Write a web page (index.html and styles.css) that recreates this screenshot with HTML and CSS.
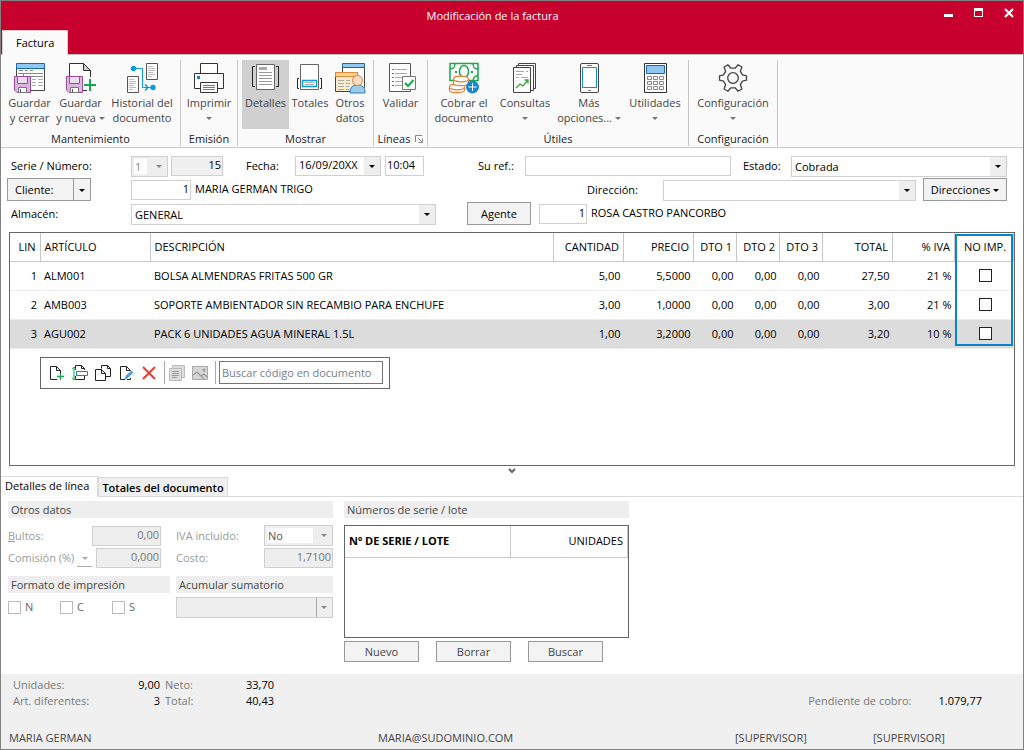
FILE: index.html
```html
<!DOCTYPE html>
<html lang="es">
<head>
<meta charset="utf-8">
<title>Modificación de la factura</title>
<link rel="stylesheet" href="styles.css">
</head>
<body>
<header class="titlebar">
  <h1 class="title">Modificación de la factura</h1>
  <div class="window-buttons">
    <button class="win-btn" aria-label="Minimizar"><svg width="10" height="10" viewBox="0 0 10 10"><path d="M0 6h9v3H0z" fill="#fff"/></svg></button>
    <button class="win-btn" aria-label="Maximizar"><svg width="10" height="10" viewBox="0 0 10 10"><path d="M0 0h9v9H0zM1 3v5h7V3z" fill="#fff" fill-rule="evenodd"/></svg></button>
    <button class="win-btn" aria-label="Cerrar"><svg width="10" height="10" viewBox="0 0 10 10"><path d="M1 1l8 8M9 1l-8 8" stroke="#fff" stroke-width="2.2"/></svg></button>
  </div>
</header>
<nav class="ribbon-tabs"><a class="ribbon-tab" href="#factura">Factura</a></nav>

<section class="ribbon" id="factura">
  <div class="group g-main">
    <div class="tools">
      <button class="tool w51">
        <svg class="icon" viewBox="0 0 32 32"><path d="M2.500 6v22.500h28V6" fill="#fff" stroke="#444"/><path d="M2.500 1.500h28v5h-28z" fill="#91c8f0" stroke="#1569b0"/><path d="M5 8.500h4m2 0h3m2 0h3M4 11.500h25" stroke="#888"/><path d="M9.500 12v3M12 14.500h17" stroke="#888"/><path d="M18 17.500h4m2 0h5M18 20.500h4m2 0h5M18 23.500h4m2 0h5" stroke="#aaa"/><path d="M.5 14.500h16v16H3l-2.500-2.500z" fill="#dcb6df" stroke="#9b4a9e"/><path d="M3.500 14.500v7h10v-7z" fill="#eedcf0" stroke="#9b4a9e"/><path d="M4.500 25.500h8v5h-8z" fill="#fff" stroke="#777"/><path d="M6.500 27v3" stroke="#555"/></svg>
        <span>Guardar<br>y cerrar</span></button>
      <button class="tool w51">
        <svg class="icon" viewBox="0 0 32 32"><path d="M4.500 1.500h14l7 7v20h-21z" fill="#fff" stroke="#333"/><path d="M18.500 1.500v7h7z" fill="#ccc" stroke="#333"/><path d="M22 15h8v14h-8z" fill="#fafafa"/><path d="M1.500 14.500h16v16H4l-2.500-2.500z" fill="#dcb6df" stroke="#9b4a9e"/><path d="M4.500 14.500v7h10v-7z" fill="#eedcf0" stroke="#9b4a9e"/><path d="M5.500 25.500h8v5h-8z" fill="#fff" stroke="#777"/><path d="M7.500 27v3" stroke="#555"/><path d="M25 17v12M19 23h12" stroke="#16a84c" stroke-width="2"/></svg>
        <span>Guardar<br>y nueva <i class="caret"></i></span></button>
      <button class="tool w72">
        <svg class="icon" viewBox="0 0 32 32"><path d="M20.500 1.500h11v16h-11zM1.500 14.500h11v16h-11z" fill="#fff" stroke="#555"/><path d="M22 4.500h5M22 6.500h7M22 8.500h7M22 10.500h5M22 12.500h7M22 14.500h4M3 17.500h5M3 19.500h7M3 21.500h7M3 23.500h5M3 25.500h7M3 27.500h4" stroke="#bbb"/><path d="M8 6.500h8.500v19h9" fill="none" stroke="#0a9be0"/><path d="M19 22.500l3 3-3 3" fill="none" stroke="#0a9be0" stroke-width="1.500"/><circle cx="7.500" cy="6.500" r="2.700" fill="#0a9be0"/><circle cx="27" cy="25.500" r="2.700" fill="#0a9be0"/></svg>
        <span>Historial del<br>documento</span></button>
    </div>
    <div class="group-name">Mantenimiento</div>
  </div>
  <div class="group">
    <div class="tools">
      <button class="tool w56">
        <svg class="icon" viewBox="0 0 32 32"><path d="M7.500 1.500h17v11h-17z" fill="#fff" stroke="#333"/><path d="M1.500 11.500h29v15h-29z" fill="#fff" stroke="#333"/><path d="M7.500 20.500h17v10h-17z" fill="#fff" stroke="#333"/><path d="M10 23.500h12M10 25.500h12M10 27.500h12" stroke="#777"/><path d="M4 14h3v3H4z" fill="#1a7fc9"/></svg>
        <span>Imprimir<br><i class="caret"></i></span></button>
    </div>
    <div class="group-name">Emisión</div>
  </div>
  <div class="group g-show">
    <div class="tools">
      <button class="tool w47 is-on">
        <svg class="icon" viewBox="0 0 32 32"><path d="M6.500 2.500h18v25h-18z" fill="#fff" stroke="#666"/><path d="M9 5h8v3H9z" fill="#aaa"/><path d="M9 10.500h13M9 13.500h13M9 16.500h13M9 19.500h13M9 22.500h13" stroke="#999"/><path d="M5 4.500H2.500v20H5M26 4.500h2.500v20H26" fill="none" stroke="#222"/></svg>
        <span>Detalles</span></button>
      <button class="tool w42">
        <svg class="icon" viewBox="0 0 32 32"><path d="M6.500 2.500h18v25h-18z" fill="#fff" stroke="#666"/><path d="M5 16.500H3.500v10H5M26 16.500h1.500v10H26" fill="none" stroke="#222"/><path d="M8.500 18.500h14v6h-14z" fill="#fff" stroke="#0a9be0" stroke-width="1.500"/><path d="M11 20.500h9M11 22.500h9" stroke="#aaa"/></svg>
        <span>Totales</span></button>
      <button class="tool w38">
        <svg class="icon" viewBox="0 0 32 32"><path d="M8.500 5.500h22v20h-22z" fill="#fff" stroke="#444"/><path d="M8.500 1.500h22v4h-22z" fill="#91c8f0" stroke="#1569b0"/><path d="M1.500 10.500h22v19h-22z" fill="#faebcc" stroke="#444"/><path d="M1.500 10.500h22v4h-22z" fill="#f6d28c" stroke="#e08a3c"/><path d="M4 18.500h6m2 0h4M4 21.500h6m2 0h4M4 24.500h6m2 0h3M4 27.500h6m2 0h3" stroke="#aaa"/><path d="M16 31c0-6 3-8 7.500-8s7.500 2 7.500 8z" fill="#9ccbec" stroke="#2a7dbd"/><circle cx="23.500" cy="18.500" r="5" fill="#f8dcc3" stroke="#d78148"/></svg>
        <span>Otros<br>datos</span></button>
    </div>
    <div class="group-name">Mostrar</div>
  </div>
  <div class="group">
    <div class="tools">
      <button class="tool w53">
        <svg class="icon" viewBox="0 0 32 32"><path d="M4.500 1.500h21v28h-21z" fill="#fff" stroke="#555"/><path d="M10 7.500h12M10 11.500h12M10 15.500h12M10 19.500h8M10 23.500h8" stroke="#aaa"/><path d="M7 7.500h2M7 15.500h2M7 19.500h2" stroke="#16a84c"/><path d="M7 11.500h2M7 23.500h2" stroke="#d33"/><path d="M17.500 14.500h13v13h-13z" fill="#fff" stroke="#777"/><path d="M20 21l3 3 5.500-6" fill="none" stroke="#16a84c" stroke-width="2"/></svg>
        <span>Validar</span></button>
    </div>
    <div class="group-name with-launcher">Líneas <button class="launcher" aria-label="Opciones de líneas"><svg width="8" height="8" viewBox="0 0 8 8"><path d="M.5 7V.5H7M3 3l4 4M7.500 3.500v4h-4" fill="none" stroke="#888"/></svg></button></div>
  </div>
  <div class="group g-utils">
    <div class="tools">
      <button class="tool w68">
        <svg class="icon" viewBox="0 0 32 32"><path d="M2 1.500h28v17H2z" fill="#fff" stroke="#16a84c" stroke-width="1.500"/><path d="M2 7c4 0 5-2 5-5M30 7c-4 0-5-2-5-5M25 19c0-3 1-5 5-5" fill="none" stroke="#16a84c" stroke-width="1.300"/><ellipse cx="16" cy="9.500" rx="4.500" ry="6" fill="#fff" stroke="#16a84c" stroke-width="1.500"/><path d="M7 9h2v2H7zM23 9h2v2h-2z" fill="#16a84c"/><g fill="#fff" stroke="#ee7a30" stroke-width="1.200"><path d="M1.500 25v3c0 3.500 15 3.500 15 0v-3"/><ellipse cx="9" cy="25" rx="7.500" ry="2.800"/><path d="M5.500 17v4c0 3.500 15 3.500 15 0v-4"/><ellipse cx="13" cy="17" rx="7.500" ry="2.800"/></g><circle cx="24.500" cy="25" r="6.500" fill="#1a87d0"/><path d="M20.500 25h8M24.500 21v8" stroke="#fff"/></svg>
        <span>Cobrar el<br>documento</span></button>
      <button class="tool w54">
        <svg class="icon" viewBox="0 0 32 32"><g fill="#fff" stroke="#444"><path d="M9.500 1.500h17v25h-17z"/><path d="M7.500 3.500h17v25h-17z"/><path d="M4.500 5.500h17v25h-17z"/></g><path d="M7 9.500h8m2 0h2M7 12.500h6M7 15.500h3m2 0h7" stroke="#aaa"/><path d="M7 26l4-4 3 2 5-6M15.500 18H19v3.500" fill="none" stroke="#35a52f" stroke-width="1.300"/></svg>
        <span>Consultas<br><i class="caret"></i></span></button>
      <button class="tool w74">
        <svg class="icon" viewBox="0 0 32 32"><rect x="7.500" y="1.500" width="18" height="29" rx="1.500" fill="#fff" stroke="#444"/><path d="M9.500 5.500h14v20h-14z" fill="#fff" stroke="#1a87d0"/><path d="M14 3.500h5M15 28.500h3" stroke="#777"/></svg>
        <span>Más<br>opciones... <i class="caret"></i></span></button>
      <button class="tool w58">
        <svg class="icon" viewBox="0 0 32 32"><path d="M5.500 1.500h22v29h-22z" fill="#fff" stroke="#333"/><path d="M7.500 3.500h18v8h-18z" fill="#91c8f0" stroke="#1569b0"/><g fill="#fff" stroke="#888"><path d="M8.500 14.500h4v3h-4zM14.500 14.500h4v3h-4zM20.500 14.500h4v3h-4zM8.500 19.500h4v3h-4zM14.500 19.500h4v3h-4zM20.500 19.500h4v3h-4zM8.500 24.500h4v3h-4zM14.500 24.500h4v3h-4zM20.500 24.500h4v3h-4z"/></g></svg>
        <span>Utilidades<br><i class="caret"></i></span></button>
    </div>
    <div class="group-name">Útiles</div>
  </div>
  <div class="group">
    <div class="tools">
      <button class="tool w88">
        <svg class="icon" viewBox="0 0 32 32"><g transform="translate(16 16)" fill="none" stroke="#444" stroke-width="1.300" stroke-linejoin="round"><path d="M9.500-3.100L13.500-2.200V2.200L9.500 3.100 7.400 6.700 8.900 11 5.100 13.200 2.100 9.800H-2.100L-5.100 13.200-8.900 11-7.400 6.700-9.500 3.100-13.500 2.200V-2.200L-9.500-3.100-7.400-6.700-8.900-11-5.100-13.200-2.100-9.800H2.100L5.100-13.200 8.900-11 7.400-6.700z"/><circle r="5.300"/></g></svg>
        <span>Configuración<br><i class="caret"></i></span></button>
    </div>
    <div class="group-name">Configuración</div>
  </div>
</section>

<main class="main">
<form class="head-form">
  <div class="row">
    <label class="lead" for="serie">Serie / Número:</label>
    <span class="combo serie off"><select id="serie" disabled><option>1</option></select></span>
    <input class="box num numero" id="numero" aria-label="Número" value="15" readonly>
    <label class="fecha-label" for="fecha">Fecha:</label>
    <span class="combo fecha"><select id="fecha"><option>16/09/20XX</option></select></span>
    <input class="box hora" aria-label="Hora" value="10:04">
    <label class="ref-label" for="ref">Su ref.:</label>
    <input class="box ref" id="ref">
    <label class="estado-label" for="estado">Estado:</label>
    <span class="combo grow"><select id="estado"><option>Cobrada</option></select></span>
  </div>
  <div class="row">
    <div class="lead split"><button class="btn" type="button">Cliente:</button><button class="btn split-arrow" type="button" aria-label="Más opciones de cliente"><i class="caret dark"></i></button></div>
    <input class="box num cliente" aria-label="Cliente" value="1">
    <output class="name client-name">MARIA GERMAN TRIGO</output>
    <label class="dir-label" for="dir">Dirección:</label>
    <span class="combo grow"><select id="dir"><option></option></select></span>
    <button class="btn dirs" type="button">Direcciones <i class="caret dark"></i></button>
  </div>
  <div class="row">
    <label class="lead" for="almacen">Almacén:</label>
    <span class="combo almacen"><select id="almacen"><option>GENERAL</option></select></span>
    <button class="btn agente" type="button">Agente</button>
    <input class="box num agente-num" aria-label="Agente" value="1">
    <output class="name">ROSA CASTRO PANCORBO</output>
  </div>
</form>

<section class="lines">
  <table class="grid">
    <colgroup><col class="c30"><col class="c110"><col><col class="c70"><col class="c70"><col class="c43"><col class="c43"><col class="c43"><col class="c70"><col class="c62"><col class="c59"></colgroup>
    <thead><tr><th class="r">LIN</th><th>ARTÍCULO</th><th>DESCRIPCIÓN</th><th class="r">CANTIDAD</th><th class="r">PRECIO</th><th class="r">DTO 1</th><th class="r">DTO 2</th><th class="r">DTO 3</th><th class="r">TOTAL</th><th class="r">% IVA</th><th class="c">NO IMP.</th></tr></thead>
    <tbody>
      <tr><td class="r">1</td><td>ALM001</td><td>BOLSA ALMENDRAS FRITAS 500 GR</td><td class="r">5,00</td><td class="r">5,5000</td><td class="r">0,00</td><td class="r">0,00</td><td class="r">0,00</td><td class="r">27,50</td><td class="r">21 %</td><td class="c"><input type="checkbox" class="check" aria-label="No imprimir línea 1"></td></tr>
      <tr><td class="r">2</td><td>AMB003</td><td>SOPORTE AMBIENTADOR SIN RECAMBIO PARA ENCHUFE</td><td class="r">3,00</td><td class="r">1,0000</td><td class="r">0,00</td><td class="r">0,00</td><td class="r">0,00</td><td class="r">3,00</td><td class="r">21 %</td><td class="c"><input type="checkbox" class="check" aria-label="No imprimir línea 2"></td></tr>
      <tr class="selected"><td class="r">3</td><td>AGU002</td><td>PACK 6 UNIDADES AGUA MINERAL 1.5L</td><td class="r">1,00</td><td class="r">3,2000</td><td class="r">0,00</td><td class="r">0,00</td><td class="r">0,00</td><td class="r">3,20</td><td class="r">10 %</td><td class="c"><input type="checkbox" class="check" aria-label="No imprimir línea 3"></td></tr>
    </tbody>
  </table>
  <div class="highlight"></div>
  <div class="line-tools">
    <button class="mini" aria-label="Nueva línea"><svg viewBox="0 0 16 16"><path d="M8 14.500H1.500v-13h6l4 4v3M7.500 1.500v4h4" fill="none" stroke="#222"/><path d="M11.500 8v7M8 11.500h7" stroke="#16a84c" stroke-width="1.300"/></svg></button>
    <button class="mini" aria-label="Insertar línea"><svg viewBox="0 0 16 16"><path d="M3.500 5V.5h6l3 3V5M9.500.5v3h3M3.500 11v3.500h9V11" fill="none" stroke="#222"/><path d="M4.500 6.500h11v4h-11z" fill="none" stroke="#1a7fc9"/><path d="M2 2v13M0 4.500l2-2.500 2 2.500M0 12.500L2 15l2-2.500" fill="none" stroke="#16a84c"/></svg></button>
    <button class="mini" aria-label="Duplicar"><svg viewBox="0 0 16 16"><path d="M6.500 3.500V.5h6l3 3v8h-5M12.500.5v3h3M.5 4.500h6l4 4v7H.5zM6.500 4.500v4h4" fill="none" stroke="#222"/></svg></button>
    <button class="mini" aria-label="Editar"><svg viewBox="0 0 16 16"><path d="M7 14.500H2.500v-13h6l4 4M8.500 1.500v4h4M12.500 13v1.500H9" fill="none" stroke="#222"/><path d="M7 14l1.500-3.500L13.500 6l1.500 1.500-5 5z" fill="#4da3e0" stroke="#1a7fc9" stroke-width=".6"/></svg></button>
    <button class="mini" aria-label="Borrar línea"><svg viewBox="0 0 16 16"><path d="M2 2l12 12M14 2L2 14" stroke="#ee3b32" stroke-width="2"/></svg></button>
    <span class="sep"></span>
    <button class="mini" disabled aria-label="Notas"><svg viewBox="0 0 16 16"><path d="M3.500 3V.5h12v12H13" fill="#ddd" stroke="#bbb"/><path d="M.5 3.500h12v12H.5z" fill="#ddd" stroke="#bbb"/><path d="M3 6.500h7M3 8.500h7M3 10.500h7M3 12.500h5" stroke="#999"/></svg></button>
    <button class="mini" disabled aria-label="Imagen"><svg viewBox="0 0 16 16"><path d="M.5 1.500h15v13H.5z" fill="#d6d6d6" stroke="#aaa"/><circle cx="12" cy="5" r="1.500" fill="#999"/><path d="M1 10l4-3 7 7M9 11l3-2 3 3" fill="none" stroke="#999" stroke-width="1.300"/></svg></button>
    <span class="sep"></span>
    <input class="search" placeholder="Buscar código en documento" aria-label="Buscar código en documento">
  </div>
</section>
<button class="splitter" aria-label="Plegar panel"><svg width="8" height="6" viewBox="0 0 8 6"><path d="M1 1l3 3 3-3" fill="none" stroke="#666" stroke-width="2"/></svg></button>

<nav class="tabs"><a class="tab current" href="#detalles">Detalles de línea</a><a class="tab" href="#totales">Totales del documento</a></nav>
<section class="details" id="detalles">
  <div class="left">
    <h2 class="bar">Otros datos</h2>
    <div class="fields">
      <label for="bultos"><u>B</u>ultos:</label><input class="box num" id="bultos" value="0,00" disabled>
      <label for="iva">IVA incluido:</label><span class="combo off iva"><select id="iva" disabled><option>No</option></select></span>
      <label for="comision">Comisión (%) <i class="drop"><i class="caret"></i></i></label><input class="box num comision" id="comision" value="0,000" disabled>
      <label for="costo">Costo:</label><input class="box num" id="costo" value="1,7100" disabled>
    </div>
    <div class="pair">
      <div>
        <h2 class="bar">Formato de impresión</h2>
        <div class="checks">
          <label><input type="checkbox" class="check" disabled>N</label>
          <label><input type="checkbox" class="check" disabled>C</label>
          <label><input type="checkbox" class="check" disabled>S</label>
        </div>
      </div>
      <div>
        <h2 class="bar">Acumular sumatorio</h2>
        <span class="combo off boxed"><select aria-label="Acumular sumatorio" disabled><option></option></select></span>
      </div>
    </div>
  </div>
  <div class="serials">
    <h2 class="bar">Números de serie / lote</h2>
    <div class="serial-box">
      <table class="serial-table"><thead><tr><th class="serial-col">Nº DE SERIE / LOTE</th><th class="units-col">UNIDADES</th></tr></thead></table>
    </div>
    <div class="actions"><button class="btn">Nuevo</button><button class="btn">Borrar</button><button class="btn">Buscar</button></div>
  </div>
</section>
</main>

<footer class="footer">
  <div class="sums">
    <dl class="totals">
      <dt>Unidades:</dt><dd>9,00</dd><dt>Neto:</dt><dd>33,70</dd>
      <dt>Art. diferentes:</dt><dd>3</dd><dt>Total:</dt><dd>40,43</dd>
    </dl>
    <dl class="pending"><dt>Pendiente de cobro:</dt><dd>1.079,77</dd></dl>
  </div>
  <div class="status"><span>MARIA GERMAN</span><span>MARIA@SUDOMINIO.COM</span><span>[SUPERVISOR]</span><span>[SUPERVISOR]</span></div>
</footer>
</body>
</html>
```
FILE: styles.css
```css
* { box-sizing: border-box; }
body {
  margin: 0;
  min-height: 100vh;
  display: flex;
  flex-direction: column;
  border: 1px solid #828282;
  background: #fff;
  color: #000;
  font: 11px/16px "Open Sans", "Noto Sans", sans-serif;
}
button, input, select { font: inherit; color: inherit; margin: 0; }
button { background: none; border: 0; padding: 0; }
a { color: inherit; text-decoration: none; }
i { font-style: normal; }
h1, h2, dl, dd { margin: 0; font-size: 11px; font-weight: 400; }

.titlebar {
  display: grid;
  grid-template-columns: 70px 1fr 70px;
  align-items: center;
  height: 29px;
  padding: 0 9px 0 0;
  background: #c8002d;
  color: #fff;
}
.title { grid-column: 2; text-align: center; }
.title { padding-right: 30px; }
.titlebar { padding-left: 0; }
.window-buttons { display: flex; justify-content: space-between; padding-bottom: 6px; grid-column: 3; }
.win-btn { display: flex; }

.ribbon-tabs { display: flex; background: #c8002d; padding: 0 1px; border-bottom: 1px solid #c0c0c0; }
.ribbon-tab {
  padding: 4px 13px;
  margin-bottom: -1px;
  background: #fafafa;
  border: 1px solid #e0c8cc;
  border-bottom: 0;
}

.ribbon { display: flex; background: #fafafa; border-bottom: 1px solid #c8c8c8; padding: 5px 0 1px; }
.group { display: flex; flex-direction: column; border-right: 1px solid #c8c8c8; }
.tools { display: flex; }
.g-main .tools { padding: 0 2px 0 3px; }
.g-show .tools { padding: 0 4px; }
.g-utils .tools { padding: 0 4px 0 2px; }
.tool {
  display: flex;
  flex-direction: column;
  align-items: center;
  height: 69px;
  padding-top: 2px;
  line-height: 15px;
  color: #444;
  white-space: nowrap;
}
.tool.is-on { background: #d0d0d0; }
.icon { width: 32px; height: 32px; margin-bottom: 1px; flex: none; }
.w38 { width: 38px; }
.w42 { width: 42px; }
.w47 { width: 47px; }
.w51 { width: 51px; }
.w53 { width: 53px; }
.w54 { width: 54px; }
.w56 { width: 56px; }
.w58 { width: 58px; }
.w68 { width: 68px; }
.w72 { width: 72px; }
.w74 { width: 74px; }
.w88 { width: 88px; }
.group-name { text-align: center; padding-top: 3px; line-height: 14px; color: #222; }
.with-launcher { display: flex; justify-content: center; gap: 5px; }
.caret {
  display: inline-block;
  border: 3px solid transparent;
  border-top-color: #777;
  border-bottom: 0;
  vertical-align: 2px;
}
.caret.dark { border-top-color: #000; }

.main { flex: 1; display: flex; flex-direction: column; }
.head-form { padding: 6px 16px 6px 6px; }
.row { display: flex; height: 24px; align-items: flex-start; }
.row label { padding: 4px 0 0 0; white-space: nowrap; }
.lead { width: 124px; }
label.lead { text-indent: 4px; }
.box {
  height: 20px;
  min-width: 0;
  border: 1px solid #d0d0d0;
  background: #fff;
  padding: 0 1px 3px;
}
.row .box, .row .combo { margin-top: 2px; }
.num { text-align: right; }
.combo { display: grid; min-width: 0; }
.combo select {
  grid-area: 1 / 1;
  appearance: none;
  width: 100%;
  height: 21px;
  min-width: 0;
  padding: 0 20px 0 3px;
  border: 1px solid #d0d0d0;
  border-radius: 0;
  background: #fff linear-gradient(#eee, #eee) right / 16px 100% no-repeat;
  opacity: 1;
}
.combo::after {
  content: "";
  grid-area: 1 / 1;
  place-self: center end;
  margin-right: 6px;
  border: 3px solid transparent;
  border-top-color: #000;
  border-bottom: 0;
  pointer-events: none;
}
.combo.off select { background-color: #eee; color: #555; }
.combo.off::after { border-top-color: #888; }
.combo.off.serie select { color: #888; background: #eee linear-gradient(#fff, #fff) 2px 2px / 13px 15px no-repeat; }
.combo.off.iva select { background: #eee linear-gradient(#fff, #fff) 2px 2px / 46px 15px no-repeat; }
.combo.off.boxed select { background: #eee linear-gradient(#aaa, #aaa) right 15px top / 1px 100% no-repeat; }
.grow { flex: 1; }
.serie { width: 37px; margin-right: 3px; }
.numero { width: 52px; background: #f0f0f0; }
.fecha-label { width: 72px; text-indent: 23px; }
.fecha { width: 86px; margin-right: 4px; }
.row .fecha select { height: 20px; padding-bottom: 2px; }
.hora { width: 39px; }
.ref-label { width: 101px; text-indent: 54px; }
.ref { width: 206px; }
.estado-label { width: 60px; text-indent: 12px; }
.name { padding: 3px 0 0 4px; white-space: nowrap; }
.client-name { width: 396px; }
.cliente { width: 60px; }
.dir-label { width: 76px; }
.btn {
  height: 23px;
  border: 1px solid #999;
  background: #f3f3f3;
  text-align: center;
}
.split { display: flex; padding-right: 40px; }
.split .btn { flex: 1; text-align: left; padding-left: 7px; }
.split .split-arrow { flex: 0 0 17px; border-left: 0; padding-left: 5px; }
.dirs { width: 84px; margin-left: 7px; white-space: nowrap; }
.almacen { width: 305px; margin-right: 31px; }
.agente { width: 64px; margin-right: 8px; }
.agente-num { width: 48px; }

.lines { position: relative; flex: 1; margin: 0 8px; border: 1px solid #666; padding-bottom: 20px; }
.grid { width: 100%; table-layout: fixed; border-collapse: collapse; }
.grid th { font-weight: 400; text-align: left; height: 28px; padding: 0 4px; border-right: 1px solid #c8c8c8; border-bottom: 1px solid #c8c8c8; white-space: nowrap; }
.grid td { height: 29px; padding: 0 3px 0 4px; border-bottom: 1px solid #ececec; white-space: nowrap; }
.grid .r { text-align: right; }
.grid .c { text-align: center; padding: 0 0 0 2px; }
.selected { background: #dcdcdc; }
.c30 { width: 30px; }
.c43 { width: 43px; }
.c59 { width: 59px; }
.c62 { width: 62px; }
.c70 { width: 70px; }
.c110 { width: 110px; }
.highlight { position: absolute; top: 1px; right: 1px; width: 58px; height: 112px; border: 2px solid #0a84c6; pointer-events: none; }
.check {
  appearance: none;
  display: block;
  width: 13px;
  height: 13px;
  border: 1px solid #222;
  background: #fff;
}
.grid .check { margin: 0 auto; }
.line-tools {
  display: flex;
  align-items: center;
  width: 350px;
  height: 32px;
  margin: 8px 0 0 30px;
  padding: 0 6px 0 8px;
  border: 1px solid #666;
}
.mini { width: 16px; height: 16px; margin-right: 7px; }
.mini svg { display: block; width: 16px; height: 16px; }
.sep { width: 1px; height: 23px; background: #aaa; margin: 0 4px 0 0; }
.sep:last-of-type { margin-right: 3px; }
.search { flex: 1; min-width: 0; height: 23px; border: 1px solid #777; padding: 0 2px; }
.search::placeholder { color: #757f8b; }

.splitter { display: flex; justify-content: center; padding: 2px 0; }
.tabs { display: flex; align-items: flex-end; border-bottom: 1px solid #dadada; }
.tab { padding: 2px 3px 0; border: 1px solid #dadada; border-bottom: 0; background: #f0f0f0; white-space: nowrap; font-weight: 600; }
.tab.current { background: #fff; border-left: 0; padding: 1px 8px 3px 4px; margin-bottom: -1px; font-weight: 400; }

.details { display: flex; gap: 11px; padding: 4px 7px 12px; }
.bar { height: 17px; line-height: 18px; padding: 0 3px; background: #eee; color: #444; white-space: nowrap; }
.left { width: 325px; }
.fields {
  display: grid;
  grid-template-columns: 84px 84px 88px 69px;
  row-gap: 2px;
  align-items: center;
  margin: 7px 0 8px;
  color: #999;
}
.fields .box { width: 69px; color: #777; background: #eee; }
.fields .comision { width: 65px; margin-left: 4px; }
.fields label { white-space: nowrap; }
.drop { display: inline-block; width: 15px; text-align: center; border-bottom: 1px solid #aaa; }
.drop .caret { border-top-color: #aaa; }
.pair { display: grid; grid-template-columns: 162px 157px; gap: 6px; }
.checks { display: flex; padding-top: 6px; color: #666; }
.checks label { display: flex; gap: 4px; width: 52px; align-items: center; }
.checks .check { border-color: #bbb; }
.boxed { margin-top: 4px; }

.serials { width: 285px; }
.serial-box { height: 113px; margin: 7px 0 3px; border: 1px solid #666; }
.serial-table { width: 100%; border-collapse: collapse; table-layout: fixed; }
.serial-table th { height: 31px; padding: 0 4px; border-right: 1px solid #c8c8c8; border-bottom: 1px solid #c8c8c8; text-align: left; }
.serial-table .serial-col { width: 165px; }
.serial-table .units-col { font-weight: 400; text-align: right; }
.actions { display: flex; gap: 17px; }
.actions .btn { width: 75px; height: 21px; padding-top: 1px; color: #444; }

.footer { background: #f0f0f0; padding: 3px 8px; }
.sums { display: flex; justify-content: space-between; align-items: flex-end; padding: 0 33px 0 4px; }
.sums dt { color: #777; }
.totals { display: grid; grid-template-columns: 92px 55px 56px 58px; }
.totals dd { text-align: right; }
.totals dt:nth-of-type(even) { padding-left: 5px; }
.pending { display: flex; gap: 27px; }
.status { display: grid; grid-template-columns: 369px 357px 138px auto; color: #444; padding-top: 21px; }
```
